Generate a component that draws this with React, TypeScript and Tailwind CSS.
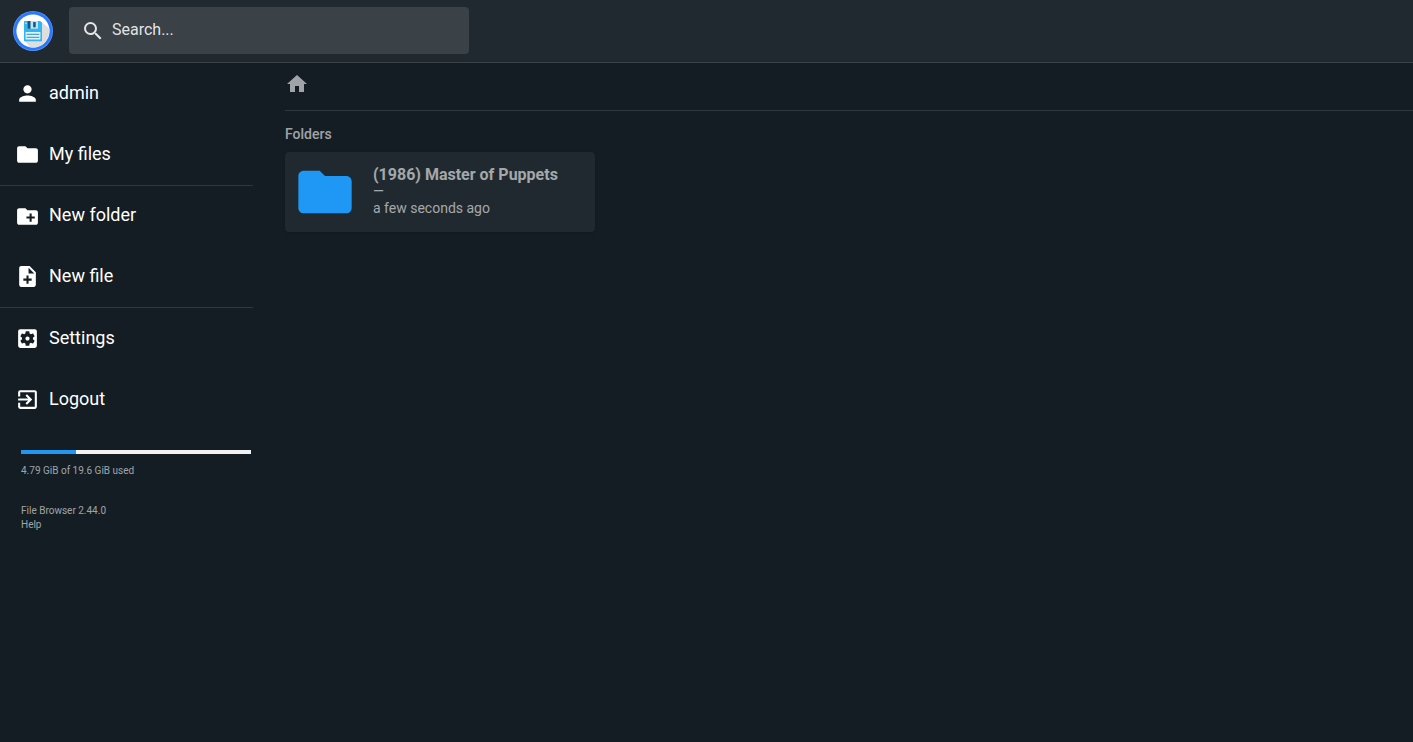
import { useState } from 'react';
import type { ReactNode } from 'react';
import {
  MdCreateNewFolder,
  MdExitToApp,
  MdFolder,
  MdHome,
  MdNoteAdd,
  MdPerson,
  MdSearch,
  MdSettingsApplications,
} from 'react-icons/md';
import type { IconType } from 'react-icons';

const usage = { used: 4.79, total: 19.6 };

const folders = [{ name: '(1986) Master of Puppets', size: '—', modified: 'a few seconds ago' }];

function Logo() {
  return (
    <svg viewBox="0 0 40 40" className="size-10 shrink-0" aria-hidden="true">
      <circle cx="20" cy="20" r="20" fill="#5a97fb" />
      <circle cx="20" cy="20" r="19.3" fill="#2979ff" />
      <circle cx="20" cy="20" r="16.6" fill="#fff" />
      <path d="M28.5 11 36.2 17.5A16.6 16.6 0 0 1 17.5 36.4L11.5 30Z" fill="#dedede" />
      <path d="M11 10.5q0-.5.5-.5H27.2L29 11.8V29.8q0 .5-.5.5h-17q-.5 0-.5-.5Z" fill="#33b5f0" />
      <path d="M14.5 10H25v7q0 .7-.7.7H15.2q-.7 0-.7-.7Z" fill="#b9e3f7" />
      <path d="M14.5 10h3v7.7h-2.3q-.7 0-.7-.7Z" fill="#14557c" />
      <rect x="20.2" y="11" width="2.5" height="5.3" fill="#14557c" />
      <circle cx="12.9" cy="12.3" r=".8" fill="#e1f5fe" />
      <rect x="12.6" y="21" width="14.8" height="7.4" rx=".4" fill="#dff3fd" />
      <rect x="13.6" y="22.8" width="12.8" height="1" fill="#2a93c8" />
      <rect x="13.6" y="25.8" width="12.8" height="1" fill="#2a93c8" />
    </svg>
  );
}

function NavButton({ icon: Icon, children }: { icon: IconType; children: ReactNode }) {
  return (
    <button type="button" className="flex flex-1 cursor-pointer items-center gap-[9px] pl-[15px] text-left text-[18px] leading-5">
      <Icon className="size-[25px] shrink-0" aria-hidden="true" />
      <span className="pb-0.5">{children}</span>
    </button>
  );
}

export default function App() {
  const [query, setQuery] = useState('');
  const percent = Math.floor((usage.used / usage.total) * 100);

  return (
    <div className="min-h-screen bg-[#141d24] font-['Roboto',sans-serif] text-white/60">
      <header className="flex h-[63px] items-start gap-4 border-b border-white/12 bg-[#20292f] pt-[7px] pl-[13px]">
        <div className="pt-1">
          <Logo />
        </div>
        <label className="flex h-[47px] w-full max-w-[400px] items-center gap-[7px] rounded bg-[#3a4147] px-3 text-white/87">
          <MdSearch className="size-6 shrink-0" aria-hidden="true" />
          <input
            type="text"
            aria-label="Search"
            placeholder="Search..."
            value={query}
            onChange={(e) => setQuery(e.target.value)}
            className="min-w-0 flex-1 bg-transparent pb-0.5 text-base outline-none placeholder:text-white/87"
          />
        </label>
      </header>

      <div className="flex">
        <nav className="w-[253px] shrink-0 text-white">
          <div className="flex h-[123px] flex-col border-b border-white/12">
            <NavButton icon={MdPerson}>admin</NavButton>
            <NavButton icon={MdFolder}>My files</NavButton>
          </div>
          <div className="flex h-[122px] flex-col border-b border-white/12">
            <NavButton icon={MdCreateNewFolder}>New folder</NavButton>
            <NavButton icon={MdNoteAdd}>New file</NavButton>
          </div>
          <div className="flex h-[122px] flex-col">
            <NavButton icon={MdSettingsApplications}>Settings</NavButton>
            <NavButton icon={MdExitToApp}>Logout</NavButton>
          </div>

          <div className="mt-5 pr-0.5 pl-[21px] text-[10px] leading-[14px] text-white/60">
            <div className="h-1 bg-[#f2f2f2]">
              <div className="h-full bg-[#2196f3]" style={{ width: `${percent}%` }} />
            </div>
            <p className="mt-2.5">
              {usage.used} GiB of {usage.total} GiB used
            </p>
            <p className="mt-[26px]">
              <a href="#release">File Browser 2.44.0</a>
            </p>
            <p>
              <a href="#help">Help</a>
            </p>
          </div>
        </nav>

        <main className="ml-8 min-w-0 flex-1">
          <div className="flex h-12 items-start border-b border-white/12 pt-[9px]">
            <a href="#home" aria-label="Home">
              <MdHome className="size-6" aria-hidden="true" />
            </a>
          </div>
          <h2 className="mt-3.5 text-[14px] leading-[18px] font-medium">Folders</h2>
          <ul className="mt-[9px] flex flex-wrap gap-4">
            {folders.map((f) => (
              <li key={f.name} className="flex h-20 w-[310px] items-center gap-4 rounded bg-[#20292f] px-2 shadow-sm">
                <MdFolder className="size-16 shrink-0 text-[#1e98f4]" aria-hidden="true" />
                <div className="pb-0.5 text-[14px] leading-[17px]">
                  <p className="text-base leading-[17px] font-bold">{f.name}</p>
                  <p>{f.size}</p>
                  <p>{f.modified}</p>
                </div>
              </li>
            ))}
          </ul>
        </main>
      </div>
    </div>
  );
}
